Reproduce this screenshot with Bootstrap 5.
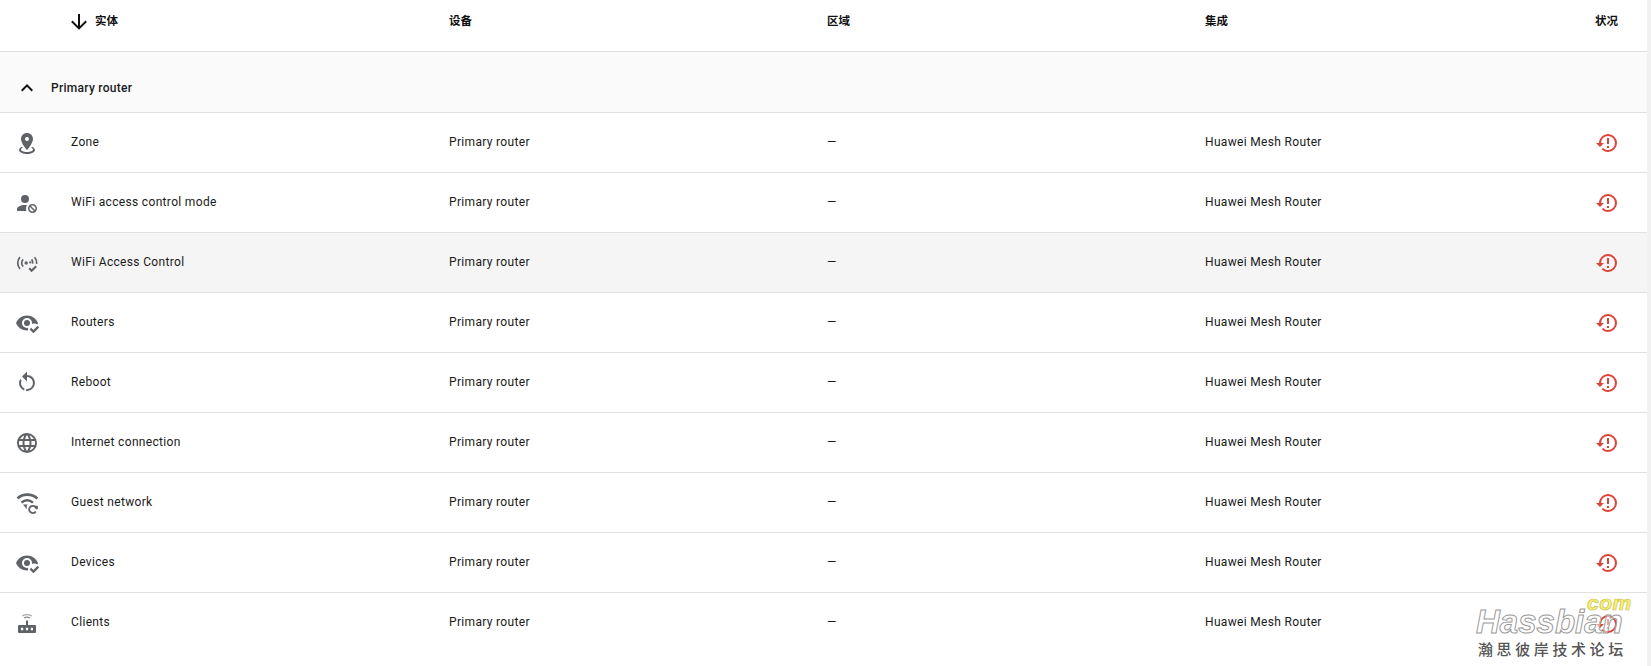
<!DOCTYPE html>
<html lang="zh"><head><meta charset="utf-8"><title>实体</title>
<link href="https://cdn.jsdelivr.net/npm/bootstrap@5.3.0/dist/css/bootstrap.min.css" rel="stylesheet">
<style>
html,body{height:666px;overflow:hidden;background:#fff}
body{font-family:Roboto,"Noto Sans CJK SC",sans-serif;font-size:12px;color:#1a1a1a;letter-spacing:.33px}
.frame{height:666px;border-right:4px solid #f1f1f1;position:relative;overflow:hidden}
.grid-row{display:grid;grid-template-columns:71px 378px 378px 378px 390px 1fr;align-items:center;border-bottom:1px solid #e0e0e0}
.head-row{height:52px;font-weight:700;font-size:11.5px;color:#111;padding-bottom:8px;letter-spacing:0}
.group-row{height:61px;background:#fafafa;padding-top:11px;font-weight:500;grid-template-columns:51px 1fr;letter-spacing:.28px}
.item-row{height:60px;padding-bottom:2px}
.last-row{border-bottom:0}
.hl{background:#f5f5f5}
.ico{width:24px;height:24px;fill:#5f6368;display:block;margin-left:15px;margin-top:2px}
.sort-ico{width:24px;height:24px;fill:#111;display:block;margin-left:-4px}
.alert-ico{width:24px;height:24px;fill:#db4437;display:block;margin-top:3px}
.chev{width:24px;height:24px;fill:#111;display:block;margin-left:15px}
.wm{position:absolute;left:1476px;top:592px;width:168px;height:70px;pointer-events:none}
.wm-main{position:absolute;left:0;top:10px;font:italic 700 33px/40px "Liberation Sans",sans-serif;color:rgba(255,255,255,.55);-webkit-text-stroke:1px #9a9a9a;letter-spacing:0}
.wm-com{position:absolute;left:111px;top:1px;font:italic 700 21px/20px "Liberation Sans",sans-serif;color:#fbf36e;-webkit-text-stroke:.7px #c9bf55;letter-spacing:.5px}
.wm-sub{position:absolute;left:2px;top:48px;font:500 15px/18px "Noto Sans CJK SC",sans-serif;color:#555;letter-spacing:3.6px;white-space:nowrap}
</style></head><body>
<svg width="0" height="0" class="position-absolute"><defs>
<symbol id="i-zone" viewBox="0 0 24 24"><path d="M12,2C15.31,2 18,4.66 18,7.95C18,12.41 12,19 12,19C12,19 6,12.41 6,7.95C6,4.66 8.69,2 12,2M12,6A2,2 0 0,0 10,8A2,2 0 0,0 12,10A2,2 0 0,0 14,8A2,2 0 0,0 12,6M20,19C20,21.21 16.42,23 12,23C7.58,23 4,21.21 4,19C4,17.71 5.22,16.56 7.11,15.83L7.75,16.74C6.67,17.19 6,17.81 6,18.5C6,19.88 8.69,21 12,21C15.31,21 18,19.88 18,18.5C18,17.81 17.33,17.19 16.25,16.74L16.89,15.83C18.78,16.56 20,17.71 20,19Z"/></symbol>
<symbol id="i-acct" viewBox="0 0 24 24"><path d="M10 4A4 4 0 0 0 6 8A4 4 0 0 0 10 12A4 4 0 0 0 14 8A4 4 0 0 0 10 4M17.5 13C15 13 13 15 13 17.5C13 20 15 22 17.5 22C20 22 22 20 22 17.5C22 15 20 13 17.5 13M10 14C5.58 14 2 15.79 2 18V20H11.5A6.5 6.5 0 0 1 11 17.5A6.5 6.5 0 0 1 11.95 14.14C11.32 14.06 10.68 14 10 14M17.5 14.5C19.16 14.5 20.5 15.84 20.5 17.5C20.5 18.06 20.35 18.58 20.08 19L16 14.92C16.42 14.65 16.94 14.5 17.5 14.5M14.92 16L19 20.08C18.58 20.35 18.06 20.5 17.5 20.5C15.84 20.5 14.5 19.16 14.5 17.5C14.5 16.94 14.65 16.42 14.92 16Z"/></symbol>
<symbol id="i-ap" viewBox="0 0 24 24"><g fill="none" stroke="#5f6368" stroke-width="1.7"><path d="M5 6.2A8.5 8.5 0 0 0 5 17.8"/><path d="M8.2 8.4A5 5 0 0 0 8.2 15.6"/><path d="M16.6 8.4A5 5 0 0 1 17.6 12.6"/><path d="M19.6 6.2A8.5 8.5 0 0 1 21.6 12.8"/><path d="M14.2 17.2 16.6 19.8 21.2 15.2" stroke-width="2"/></g><circle cx="11.2" cy="12" r="1.7"/><circle cx="15.2" cy="11.4" r="1.1"/></symbol>
<symbol id="i-eye" viewBox="0 0 24 24"><path d="M12,4.5C7,4.5 2.73,7.61 1,12C2.73,16.39 7,19.5 12,19.5C12.36,19.5 12.72,19.5 13.08,19.45C13.03,19.13 13,18.82 13,18.5C13,17.94 13.08,17.38 13.24,16.84C12.83,16.94 12.42,17 12,17A5,5 0 0,1 7,12A5,5 0 0,1 12,7A5,5 0 0,1 17,12C17,12.29 16.97,12.59 16.92,12.88C17.58,12.63 18.29,12.5 19,12.5C20.17,12.5 21.31,12.84 22.29,13.5C22.56,13 22.8,12.5 23,12C21.27,7.61 17,4.5 12,4.5M12,9A3,3 0 0,0 9,12A3,3 0 0,0 12,15A3,3 0 0,0 15,12A3,3 0 0,0 12,9Z"/><path d="M15.4 17.6 18.4 20.6 23.4 15.6" fill="none" stroke="#5f6368" stroke-width="2.3"/></symbol>
<symbol id="i-restart" viewBox="0 0 24 24"><path d="M12,4C14.1,4 16.1,4.8 17.6,6.3C20.7,9.4 20.7,14.5 17.6,17.6C15.8,19.5 13.3,20.2 10.9,19.9L11.4,17.9C13.1,18.1 14.9,17.5 16.2,16.2C18.5,13.9 18.5,10.1 16.2,7.7C15.1,6.6 13.5,6 12,6V10.6L7,5.6L12,0.6V4M6.3,17.6C3.7,15 3.3,11 5.1,7.9L6.6,9.4C5.5,11.6 5.9,14.4 7.8,16.2C8.3,16.7 8.9,17.1 9.6,17.4L9,19.4C8,19 7.1,18.4 6.3,17.6Z"/></symbol>
<symbol id="i-web" viewBox="0 0 24 24"><path d="M16.36,14C16.44,13.34 16.5,12.68 16.5,12C16.5,11.32 16.44,10.66 16.36,10H19.74C19.9,10.64 20,11.31 20,12C20,12.69 19.9,13.36 19.74,14M14.59,19.56C15.19,18.45 15.65,17.25 15.97,16H18.92C17.96,17.65 16.43,18.93 14.59,19.56M14.34,14H9.66C9.56,13.34 9.5,12.68 9.5,12C9.5,11.32 9.56,10.65 9.66,10H14.34C14.43,10.65 14.5,11.32 14.5,12C14.5,12.68 14.43,13.34 14.34,14M12,19.96C11.17,18.76 10.5,17.43 10.09,16H13.91C13.5,17.43 12.83,18.76 12,19.96M8,8H5.08C6.03,6.34 7.57,5.06 9.4,4.44C8.8,5.55 8.35,6.75 8,8M5.08,16H8C8.35,17.25 8.8,18.45 9.4,19.56C7.57,18.93 6.03,17.65 5.08,16M4.26,14C4.1,13.36 4,12.69 4,12C4,11.31 4.1,10.64 4.26,10H7.64C7.56,10.66 7.5,11.32 7.5,12C7.5,12.68 7.56,13.34 7.64,14M12,4.03C12.83,5.23 13.5,6.57 13.91,8H10.09C10.5,6.57 11.17,5.23 12,4.03M18.92,8H15.97C15.65,6.75 15.19,5.55 14.59,4.44C16.43,5.07 17.96,6.34 18.92,8M12,2C6.47,2 2,6.5 2,12A10,10 0 0,0 12,22A10,10 0 0,0 22,12A10,10 0 0,0 12,2Z"/></symbol>
<symbol id="i-wifi" viewBox="0 0 24 24"><g fill="none" stroke="#5f6368"><path d="M2.4 7.4C8 2.4 16.4 2.4 22.4 7.4" stroke-width="2.6"/><path d="M6.4 11.6C10 8.6 14.4 8.6 18 11.6" stroke-width="2.4"/><path d="M21.2 17.4A3.6 3.6 0 1 0 20.8 20.4" stroke-width="1.8"/></g><path d="M8 13.4 13 13.4 11.8 14.6V18.2Z"/><path d="M19.4 14.8H22.8V17.9L21.3 18.4Z"/></symbol>
<symbol id="i-router" viewBox="0 0 24 24"><path d="M4 14H11V9.5H13V14H20A1 1 0 0 1 21 15V21A1 1 0 0 1 20 22H4A1 1 0 0 1 3 21V15A1 1 0 0 1 4 14M6 16.8V19.2H8.2V16.8H6M10.9 16.8V19.2H13.1V16.8H10.9M15.8 16.8V19.2H18V16.8H15.8Z"/><path d="M8.8 6.6C10.7 5.2 13.3 5.2 15.2 6.6L14.5 7.6C13 6.5 11 6.5 9.5 7.6Z" opacity=".75"/><path d="M7 4.6C9.9 2.6 14.1 2.6 17 4.6L16.3 5.6C13.8 3.9 10.2 3.9 7.7 5.6Z" opacity=".55"/></symbol>
<symbol id="i-alert" viewBox="0 0 24 24"><path d="M13 3A9 9 0 0 0 4 12H1L5 16L9 12H6A7 7 0 0 1 13 5A7 7 0 0 1 20 12A7 7 0 0 1 13 19C11.07 19 9.32 18.21 8.06 16.94L6.64 18.36C8.27 20 10.5 21 13 21A9 9 0 0 0 22 12A9 9 0 0 0 13 3M12 7V13H14V7H12M12 15V17H14V15H12Z"/></symbol>
</defs></svg>
<main class="frame">
  <div class="grid-row head-row">
    <div></div>
    <div class="d-flex align-items-center gap-1"><svg class="sort-ico" viewBox="0 0 24 24"><path d="M11 4H13V16L18.5 10.5L19.92 11.92L12 19.84L4.08 11.92L5.5 10.5L11 16V4Z"/></svg><span>实体</span></div>
    <div>设备</div><div>区域</div><div>集成</div><div>状况</div>
  </div>
  <div class="grid-row group-row"><svg class="chev" viewBox="0 0 24 24"><path d="M7.41 15.41 12 10.83l4.59 4.58L18 14l-6-6-6 6z"/></svg><div>Primary router</div></div>
  <div class="grid-row item-row"><svg class="ico"><use href="#i-zone"/></svg><div>Zone</div><div>Primary router</div><div>—</div><div>Huawei Mesh Router</div><div><svg class="alert-ico"><use href="#i-alert"/></svg></div></div>
  <div class="grid-row item-row"><svg class="ico"><use href="#i-acct"/></svg><div>WiFi access control mode</div><div>Primary router</div><div>—</div><div>Huawei Mesh Router</div><div><svg class="alert-ico"><use href="#i-alert"/></svg></div></div>
  <div class="grid-row item-row hl"><svg class="ico"><use href="#i-ap"/></svg><div>WiFi Access Control</div><div>Primary router</div><div>—</div><div>Huawei Mesh Router</div><div><svg class="alert-ico"><use href="#i-alert"/></svg></div></div>
  <div class="grid-row item-row"><svg class="ico"><use href="#i-eye"/></svg><div>Routers</div><div>Primary router</div><div>—</div><div>Huawei Mesh Router</div><div><svg class="alert-ico"><use href="#i-alert"/></svg></div></div>
  <div class="grid-row item-row"><svg class="ico"><use href="#i-restart"/></svg><div>Reboot</div><div>Primary router</div><div>—</div><div>Huawei Mesh Router</div><div><svg class="alert-ico"><use href="#i-alert"/></svg></div></div>
  <div class="grid-row item-row"><svg class="ico"><use href="#i-web"/></svg><div>Internet connection</div><div>Primary router</div><div>—</div><div>Huawei Mesh Router</div><div><svg class="alert-ico"><use href="#i-alert"/></svg></div></div>
  <div class="grid-row item-row"><svg class="ico"><use href="#i-wifi"/></svg><div>Guest network</div><div>Primary router</div><div>—</div><div>Huawei Mesh Router</div><div><svg class="alert-ico"><use href="#i-alert"/></svg></div></div>
  <div class="grid-row item-row"><svg class="ico"><use href="#i-eye"/></svg><div>Devices</div><div>Primary router</div><div>—</div><div>Huawei Mesh Router</div><div><svg class="alert-ico"><use href="#i-alert"/></svg></div></div>
  <div class="grid-row item-row last-row"><svg class="ico"><use href="#i-router"/></svg><div>Clients</div><div>Primary router</div><div>—</div><div>Huawei Mesh Router</div><div><svg class="alert-ico"><use href="#i-alert"/></svg></div></div>
  <div class="wm"><span class="wm-main">Hassbian</span><span class="wm-com">com</span><span class="wm-sub">瀚思彼岸技术论坛</span></div>
</main>
</body></html>
